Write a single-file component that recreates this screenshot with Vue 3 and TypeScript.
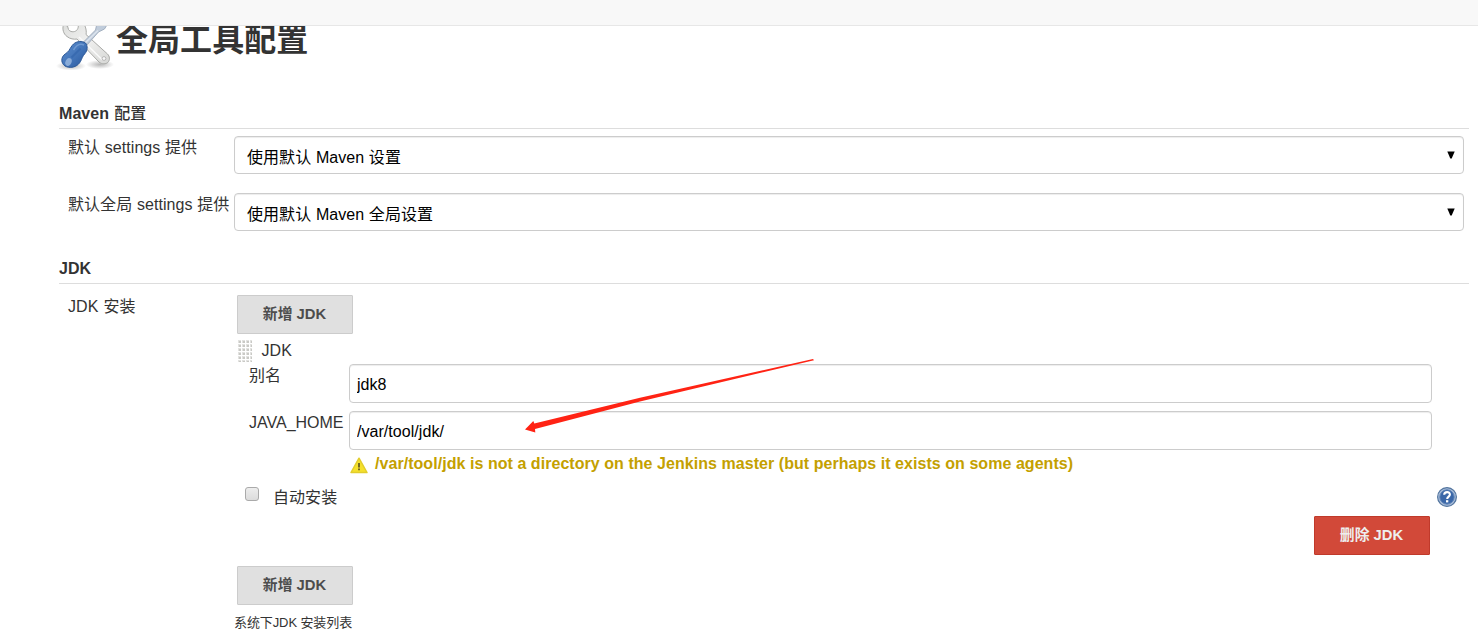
<script setup lang="ts">
import { ref } from 'vue'

interface Provider {
  label: string
  value: string
}

const providers: Provider[] = [
  { label: '默认 settings 提供', value: '使用默认 Maven 设置' },
  { label: '默认全局 settings 提供', value: '使用默认 Maven 全局设置' },
]

const alias = ref('jdk8')
const javaHome = ref('/var/tool/jdk/')
const autoInstall = ref(false)
</script>

<template>
  <div class="page">
    <div class="topbar"></div>

    <header class="title">
      <svg class="tools" width="60" height="60" viewBox="0 0 60 60">
        <defs>
          <linearGradient id="metal" x1="0" y1="0" x2="1" y2="1">
            <stop offset="0" stop-color="#dcdddb" />
            <stop offset=".5" stop-color="#f0f0ef" />
            <stop offset="1" stop-color="#d6d7d5" />
          </linearGradient>
          <linearGradient id="grip" x1="0" y1="0" x2="1" y2="1">
            <stop offset="0" stop-color="#5c8ccb" />
            <stop offset=".5" stop-color="#4577bb" />
            <stop offset="1" stop-color="#28569b" />
          </linearGradient>
          <radialGradient id="shade">
            <stop offset="0" stop-color="#555" stop-opacity=".42" />
            <stop offset="1" stop-color="#555" stop-opacity="0" />
          </radialGradient>
        </defs>
        <ellipse cx="15" cy="54" rx="15" ry="4.500" fill="url(#shade)" />
        <ellipse cx="44" cy="52.500" rx="14" ry="4.500" fill="url(#shade)" />
        <path d="M7.500 13 C6 17 7.500 22 11 24.500 C14 27 18 27.500 21 27 L43 50 C46 52.500 50 52.300 52 50.300 C54 48 54 44.500 51.500 42 L30 22.500 C31 18 29 12 25 8 L20 8 C23 12 23 16 20.500 18.500 C18 20.500 14 20 12.500 17.500 L11.500 14 Z" fill="url(#metal)" stroke="#a9aaa7" stroke-width="1" stroke-linejoin="round" />
        <path d="M23 25 L46 47.500" stroke="#fafafa" stroke-width="1.500" />
        <circle cx="48" cy="46.500" r="1.900" fill="#f8f8f8" stroke="#aaa" stroke-width=".8" />
        <path d="M26.500 31 L39.500 18 L41 11 L49 5 L54 8 L48.500 17 L42.500 20 L30.500 33.500 Z" fill="#c0ccdb" stroke="#95a3b5" stroke-width=".8" />
        <path d="M29 31 L42 18.500" stroke="#dce4ee" stroke-width="1.300" />
        <path d="M17.500 32 C21 29 26 28.800 29.500 31 C32 34 31.500 38.500 29 41.500 C26.500 44 26 46.500 24.500 49.500 C22 54 17 56 12.500 55.200 C7 54.500 4.500 49.500 6.500 45 C8 42 11.500 41 13 38.500 C14.500 36 15.500 34 17.500 32 Z" fill="url(#grip)" stroke="#2b5796" stroke-width="1" />
        <path d="M17.500 38 C20.500 33 24.500 31.200 28 33" fill="none" stroke="#88addd" stroke-width="1.500" opacity=".6" />
        <path d="M15.500 45.500 L24.500 36.500" stroke="#2d5fa7" stroke-width="1.800" opacity=".5" />
        <ellipse cx="12.500" cy="50" rx="3" ry="4" fill="#b9d0ec" opacity=".6" transform="rotate(25 12.500 50)" />
      </svg>
      <h1>全局工具配置</h1>
    </header>

    <main class="form">
      <h2 class="section">Maven <span class="section-cjk">配置</span></h2>
      <div v-for="p in providers" :key="p.label" class="provider">
        <label class="provider-label">{{ p.label }}</label>
        <div class="select">
          <span>{{ p.value }}</span>
          <svg width="8" height="8" viewBox="0 0 8 8"><path d="M.3 .5H7.700L4.700 7.500H3.300Z" /></svg>
        </div>
      </div>

      <h2 class="section">JDK</h2>
      <div class="jdk">
        <div class="jdk-label">JDK 安装</div>
        <div class="jdk-body">
          <button class="btn">新增 JDK</button>
          <div class="handle-row">
            <svg class="handle" width="14" height="22" viewBox="0 0 14 22">
              <defs>
                <pattern id="dots" width="4" height="4" patternUnits="userSpaceOnUse">
                  <rect width="3" height="3" fill="#e2e2e0" />
                  <rect x="1" y="1" width="2" height="2" fill="#c9c9c5" />
                </pattern>
              </defs>
              <rect width="14" height="22" fill="url(#dots)" />
            </svg>
            <span>JDK</span>
          </div>
          <div class="field">
            <label>别名</label>
            <input v-model="alias" type="text" />
          </div>
          <div class="field">
            <label>JAVA_HOME</label>
            <input v-model="javaHome" type="text" />
          </div>
          <div class="warning">
            <svg width="18" height="17" viewBox="0 0 18 17">
              <path d="M9 1.200 L17 15.500 H1 Z" fill="#f5e02c" stroke="#e2cd2c" stroke-width="1.500" stroke-linejoin="round" />
              <path d="M9 6V10.500M9 11.500V13.200" stroke="#665c20" stroke-width="1.800" />
            </svg>
            <span>/var/tool/jdk is not a directory on the Jenkins master (but perhaps it exists on some agents)</span>
          </div>
          <div class="auto">
            <input v-model="autoInstall" class="check" type="checkbox" />
            <span class="auto-text">自动安装</span>
            <svg class="help" width="20" height="20" viewBox="0 0 20 20">
              <circle cx="10" cy="10" r="9.400" fill="#a9bdd9" stroke="#53759f" stroke-width="1.200" />
              <circle cx="10" cy="10" r="7.200" fill="#3a67a8" stroke="#5f84b7" stroke-width="1" />
              <path d="M7.200 7.700C7.300 4.300 12.900 4.300 12.900 7.500C12.900 9.600 10.200 9.600 10.200 12" fill="none" stroke="#fff" stroke-width="2.100" />
              <rect x="9" y="13.200" width="2.300" height="2.200" fill="#fff" />
            </svg>
          </div>
          <button class="btn btn-danger">删除 JDK</button>
          <button class="btn btn-last">新增 JDK</button>
          <div class="hint">系统下JDK 安装列表</div>
        </div>
      </div>
    </main>

    <svg class="arrow" width="290" height="75" viewBox="0 0 290 75">
      <path d="M0 70.500 L8.300 62 L9.300 64.600 L115 38.700 L288 0 L289 1.200 L115 42.600 L10 70 L10.300 73.500 Z" fill="#ff2314" />
    </svg>
  </div>
</template>

<style>
html,
body {
  margin: 0;
  overflow: hidden;
  background: #fff;
}
</style>

<style scoped>
.page {
  position: relative;
  box-sizing: border-box;
  width: 1478px;
  height: 630px;
  overflow: hidden;
  background: #fff;
  color: #333;
  font: 16px/24px "Liberation Sans", "Noto Sans CJK SC", sans-serif;
  letter-spacing: 0.05px;
}
.topbar {
  position: relative;
  z-index: 1;
  box-sizing: border-box;
  height: 26px;
  background: #f8f8f8;
  border-bottom: 1px solid #e7e7e7;
}
.title {
  display: flex;
  align-items: flex-start;
  height: 75px;
  padding-left: 56px;
}
.tools {
  margin-top: -14px;
}
h1 {
  margin: -10px 0 0;
  font-size: 32px;
  line-height: 48px;
  font-weight: 700;
}
.form {
  width: 1410px;
  margin-left: 59px;
}
.section {
  box-sizing: border-box;
  height: 28px;
  margin: 0 0 7px;
  padding-top: 1px;
  border-bottom: 1px solid #ddd;
  font-size: 16px;
  line-height: 24px;
  font-weight: 700;
  word-spacing: 0.6px;
}
.section-cjk {
  font-weight: 500;
}
.provider {
  display: flex;
  height: 57px;
}
.provider-label {
  width: 166px;
  padding-left: 9px;
  white-space: nowrap;
  word-spacing: 0.2px;
}
.select {
  box-sizing: border-box;
  display: flex;
  align-items: center;
  justify-content: space-between;
  width: 1230px;
  height: 38px;
  padding: 5px 8px 0 12px;
  border: 1px solid #ccc;
  border-radius: 4px;
  box-shadow: inset 0 1px 1px rgba(0, 0, 0, 0.075);
  color: #000;
  word-spacing: 0.2px;
}
.select svg {
  margin-top: -5px;
}
.provider + .section {
  margin-top: 6px;
}
.jdk {
  display: flex;
  padding-top: 4px;
}
.jdk-label {
  width: 166px;
  padding-left: 9px;
  word-spacing: 0.6px;
}
.jdk-body {
  display: flex;
  flex-direction: column;
  align-items: flex-start;
  width: 1226px;
}
.btn {
  box-sizing: border-box;
  width: 116px;
  height: 39px;
  margin-left: 3px;
  padding: 0 1px 2px 0;
  border: 1px solid #ccc;
  border-radius: 1px;
  background: #e0e0e0;
  color: #4d4d4d;
  font: 700 14.800px/22px "Liberation Sans", "Noto Sans CJK SC", sans-serif;
}
.handle-row {
  display: flex;
  align-items: center;
  gap: 9.500px;
  height: 30px;
  padding: 3px 0 0 4px;
  box-sizing: border-box;
}
.field {
  display: flex;
  height: 47px;
}
.field label {
  width: 100px;
  padding-left: 15px;
  letter-spacing: 0;
}
.field input {
  box-sizing: border-box;
  width: 1083px;
  height: 39px;
  padding: 2px 7px 0;
  border: 1px solid #ccc;
  border-radius: 4px;
  box-shadow: inset 0 1px 1px rgba(0, 0, 0, 0.075);
  color: #000;
  font: inherit;
  letter-spacing: inherit;
  outline: none;
}
.warning {
  display: flex;
  align-items: center;
  gap: 7px;
  height: 20px;
  margin: -4px 0 0 116px;
  color: #c4a000;
  font-weight: 700;
  white-space: nowrap;
}
.warning svg {
  margin-top: 3px;
}
.auto {
  display: flex;
  width: 1212px;
  height: 24px;
  margin: 11px 0 0 11px;
}
.check {
  appearance: none;
  box-sizing: border-box;
  width: 14px;
  height: 14px;
  margin: 2px 14px 0 0;
  border: 1px solid #aaa;
  border-radius: 3px;
  background: linear-gradient(#ededed, #dcdcdc);
}
.auto-text {
  padding-top: 1px;
}
.help {
  margin: 2px 0 0 auto;
}
.btn-danger {
  margin: 7px 0 0 1080px;
  border-color: #c03a2b;
  background: #d24939;
  color: #eee;
}
.btn-last {
  margin-top: 11px;
}
.hint {
  margin-top: 6px;
  font-size: 13px;
  line-height: 24px;
  letter-spacing: -0.1px;
}
.arrow {
  position: absolute;
  left: 525px;
  top: 359px;
}
</style>
